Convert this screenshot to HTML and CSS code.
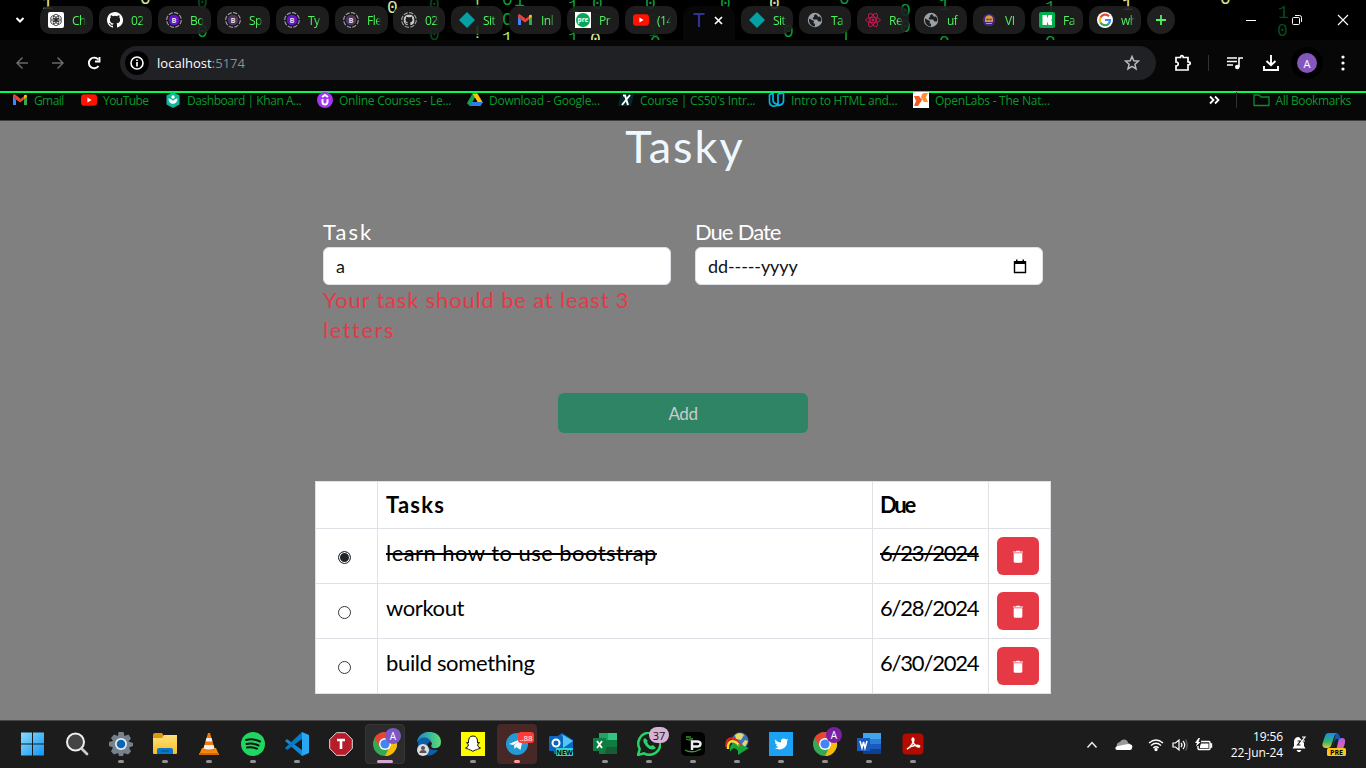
FILE: index.html
```html
<!DOCTYPE html>
<html lang="en">
<head>
<meta charset="utf-8">
<title>Tasky</title>
<link rel="stylesheet" href="styles.css">
</head>
<body>
<svg class="defs" width="0" height="0">
  <defs>
    <linearGradient id="win" x2="1" y2="1"><stop stop-color="#86dcfb"/><stop offset="1" stop-color="#1495f5"/></linearGradient>
    <linearGradient id="fold" x2="0" y2="1"><stop stop-color="#ffe07b"/><stop offset="1" stop-color="#f8bd25"/></linearGradient>
    <linearGradient id="edge" x2="1" y2="0"><stop stop-color="#1686d5"/><stop offset="1" stop-color="#5ddf70"/></linearGradient>
    <linearGradient id="cop" x2="0" y2="1"><stop stop-color="#168ce8"/><stop offset=".6" stop-color="#37b56b"/><stop offset="1" stop-color="#e9c72c"/></linearGradient>
    <linearGradient id="cop2" x2="0" y2="1"><stop stop-color="#b059e8"/><stop offset="1" stop-color="#fb7184"/></linearGradient>
    <symbol id="gmail" viewBox="0 0 16 16"><path d="M1 4v9h3V7.5z" fill="#4285f4"/><path d="M15 4v9h-3V7.5z" fill="#34a853"/><path d="M1 3.5C1 2.3 2.5 2 3.4 2.7L8 6.2V10L1 4.8z" fill="#ea4335"/><path d="M4 4.2 8 7.2l4-3V7.6l-4 3-4-3z" fill="#ea4335"/><path d="M15 4.8 12 7.2V3.3c1-.9 3-1 3 .8z" fill="#fbbc04"/></symbol>
    <symbol id="youtube" viewBox="0 0 16 16"><rect y="2.3" width="16" height="11.5" rx="3" fill="#ff1200"/><path d="m6.4 5.5 4.2 2.5-4.2 2.5z" fill="#fff"/></symbol>
    <symbol id="github" viewBox="0 0 16 16"><path fill="currentColor" d="M8 0C3.58 0 0 3.58 0 8c0 3.54 2.29 6.53 5.47 7.59.4.07.55-.17.55-.38v-1.49c-2.01.37-2.53-.49-2.69-.94-.09-.23-.48-.94-.82-1.13-.28-.15-.68-.52-.01-.53.63-.01 1.08.58 1.23.82.72 1.21 1.87.87 2.33.66.07-.52.28-.87.51-1.07-1.78-.2-3.64-.89-3.64-3.95 0-.87.31-1.59.82-2.15-.08-.2-.36-1.02.08-2.12 0 0 .67-.21 2.2.82a7.4 7.4 0 0 1 4 0c1.53-1.04 2.2-.82 2.2-.82.44 1.1.16 1.92.08 2.12.51.56.82 1.27.82 2.15 0 3.07-1.87 3.75-3.65 3.95.29.25.54.73.54 1.48v2.2c0 .21.15.46.55.38A8 8 0 0 0 8 0z"/></symbol>
    <symbol id="boot" viewBox="0 0 16 16"><circle cx="8" cy="8" r="7.3" fill="#17131c" stroke="#9b9b9f" stroke-width="1.2" stroke-dasharray="4.4 1.3"/><circle cx="8" cy="8" r="5.4" fill="currentColor"/><text x="8" y="10.8" font-size="7.5" font-weight="700" text-anchor="middle" fill="#ddd">B</text></symbol>
    <symbol id="diamond" viewBox="0 0 16 16"><path d="m8 0 8 8-8 8-8-8z" fill="#05a0a3"/></symbol>
    <symbol id="globe" viewBox="0 0 16 16"><circle cx="8" cy="8" r="7.2" fill="#9aa0a6"/><path d="M2 6.5 5 8l2 1-.5 2 1.5 1v2.5C4 14 1.5 11 2 6.5zM9 2l-2 1.5V5L5.5 6l1 1.5H10l1.5 2H14l.5-2.5L13 4.5l-2 .3z" fill="#1d1e20"/></symbol>
    <symbol id="chrome" viewBox="0 0 24 24"><circle cx="12" cy="12" r="12" fill="#34a853"/><path d="M1.6 6A12 12 0 0 1 22.4 6L12 7l-5 8z" fill="#ea4335"/><path d="M22.4 6A12 12 0 0 1 12 24l5-10-4-8z" fill="#fbbc04"/><circle cx="12" cy="12" r="6" fill="#fff"/><circle cx="12" cy="12" r="4.6" fill="#4285f4"/></symbol>
    <symbol id="trash" viewBox="0 0 14 14"><path d="M2 1.4h3L5.5.8h3l.5.6h3v1H2zM2.7 3.3h8.6v8.2c0 .7-.5 1.2-1.2 1.2H3.9c-.7 0-1.2-.5-1.2-1.2z" fill="#fff"/></symbol>
  </defs>
</svg>

<header class="browser">
  <div class="tabstrip">
    <svg class="rain" width="1366" height="40" viewBox="0 0 1366 40">
      <g fill="#d9e89a"><text x="42" y="9">1</text><text x="140" y="4">0</text><text x="387" y="13">0</text><text x="590" y="45">0</text><text x="769" y="9">0</text><text x="1122" y="10">1</text><text x="1220" y="4">0</text></g>
      <g fill="#0a9a36"><text x="197" y="37">0</text><text x="502" y="5">0</text><text x="502" y="25">C</text><text x="514" y="6">1</text><text x="568" y="12">1</text><text x="592" y="9">0</text><text x="645" y="9">0</text><text x="650" y="48">0</text><text x="720" y="9">0</text><text x="783" y="37">0</text><text x="900" y="16">0</text><text x="900" y="32">0</text><text x="939" y="10">1</text><text x="939" y="48">0</text><text x="1045" y="13">1</text><text x="1045" y="48">0</text><text x="568" y="44">1</text><text x="840" y="42">1</text><text x="839" y="4">0</text></g>
      <g fill="#9de071"><text x="502" y="44">1</text><text x="472" y="8">!</text><text x="472" y="38">!</text></g>
      <g fill="#064b1d"><text x="429" y="10">0</text><text x="429" y="26">0</text><text x="429" y="40">0</text><text x="580" y="26">1</text><text x="590" y="25">0</text><text x="648" y="26">0</text><text x="648" y="36">1</text><text x="1278" y="18">1</text><text x="1277" y="36">0</text><text x="197" y="8">0</text></g>
    </svg>
    <div class="tabsearch"><svg width="10" height="8"><path d="m1.500 2 3.500 3.500L8.500 2" stroke="#fff" stroke-width="2" fill="none"/></svg></div>
    <div class="tabs">
      <div class="tab wide"><svg width="16" height="16"><rect width="16" height="16" rx="2" fill="#fff"/><g fill="none" stroke="#222" stroke-width=".75"><ellipse cx="8" cy="5.500" rx="2.700" ry="3.300"/><ellipse cx="8" cy="5.500" rx="2.700" ry="3.300" transform="rotate(60 8 8)"/><ellipse cx="8" cy="5.500" rx="2.700" ry="3.300" transform="rotate(120 8 8)"/><ellipse cx="8" cy="5.500" rx="2.700" ry="3.300" transform="rotate(180 8 8)"/><ellipse cx="8" cy="5.500" rx="2.700" ry="3.300" transform="rotate(240 8 8)"/><ellipse cx="8" cy="5.500" rx="2.700" ry="3.300" transform="rotate(300 8 8)"/></g></svg><span>Ch</span></div>
      <div class="tab wide white"><svg width="16" height="16"><use href="#github"/></svg><span>02</span></div>
      <div class="tab wide violet"><svg width="16" height="16"><use href="#boot"/></svg><span>Bo</span></div>
      <div class="tab wide plum"><svg width="16" height="16"><use href="#boot"/></svg><span>Sp</span></div>
      <div class="tab wide violet"><svg width="16" height="16"><use href="#boot"/></svg><span>Ty</span></div>
      <div class="tab wide plum"><svg width="16" height="16"><use href="#boot"/></svg><span>Fle</span></div>
      <div class="tab grey"><svg width="16" height="16"><circle cx="8" cy="8" r="7.300" fill="none" stroke="#999" stroke-width="1.200" stroke-dasharray="4.400 1.300"/><use href="#github" x="2.500" y="2.500" width="11" height="11"/></svg><span>02</span></div>
      <div class="tab"><svg width="16" height="16"><use href="#diamond"/></svg><span>Sit</span></div>
      <div class="tab"><svg width="16" height="16"><use href="#gmail"/></svg><span>Inl</span></div>
      <div class="tab"><svg width="16" height="16"><rect width="16" height="16" fill="#fff"/><circle cx="8" cy="8" r="7" fill="#08a558"/><text x="8" y="10.300" font-size="6.500" font-weight="700" text-anchor="middle" fill="#fff">pre</text></svg><span>Pr</span></div>
      <div class="tab"><svg width="16" height="16"><use href="#youtube"/></svg><span>(14</span></div>
      <div class="tab active"><svg width="16" height="16"><path d="M2.500 2h11M8 2v13" stroke="#303394" stroke-width="2.200"/></svg><svg class="close" width="9" height="9"><path d="m1 1 7 7m0-7-7 7" stroke="#fff" stroke-width="1.700"/></svg></div>
      <div class="tab"><svg width="16" height="16"><use href="#diamond"/></svg><span>Sit</span></div>
      <div class="tab"><svg width="16" height="16"><use href="#globe"/></svg><span>Ta</span></div>
      <div class="tab"><svg width="16" height="16"><g fill="none" stroke="#c2184f"><ellipse cx="8" cy="8" rx="7.200" ry="2.800"/><ellipse cx="8" cy="8" rx="7.200" ry="2.800" transform="rotate(60 8 8)"/><ellipse cx="8" cy="8" rx="7.200" ry="2.800" transform="rotate(120 8 8)"/></g><circle cx="8" cy="8" r="1.500" fill="#c2184f"/></svg><span>Re</span></div>
      <div class="tab"><svg width="16" height="16"><use href="#globe"/></svg><span>uf</span></div>
      <div class="tab"><svg width="16" height="16"><circle cx="8" cy="8" r="6.300" fill="#432779"/><path d="M4 7c0-5 8-5 8 0v3H4zM5 11h6v1H5z" fill="#d49a43"/><path d="M5.500 7.500h2m1 0h2" stroke="#432779" stroke-width="1.500"/></svg><span>VI</span></div>
      <div class="tab"><svg width="16" height="16"><rect width="16" height="16" rx="2" fill="#00b14f"/><path d="M3.500 3H8v3.500L9.500 3H13v4l-1 1 1 1v4H9.500L8 9.500V13H3.500z" fill="#fff"/></svg><span>Fa</span></div>
      <div class="tab"><svg width="16" height="16"><circle cx="8" cy="8" r="8" fill="#fff"/><g fill="none" stroke-width="2.200"><path d="M12 4.300A5.200 5.200 0 0 0 3.400 5.600" stroke="#ea4335"/><path d="M3.400 5.600a5.200 5.200 0 0 0 0 4.800" stroke="#fbbc04"/><path d="M3.400 10.400a5.200 5.200 0 0 0 8.300 1.300" stroke="#34a853"/><path d="M11.700 11.700A5 5 0 0 0 13 8H8" stroke="#4285f4"/></g></svg><span>wh</span></div>
      <div class="newtab"><svg width="12" height="12"><path d="M6 1v10M1 6h10" stroke="#50f260" stroke-width="1.800"/></svg></div>
    </div>
    <div class="wincontrols">
      <svg width="12" height="12"><path d="M1 6.500h10" stroke="#fff"/></svg>
      <svg width="12" height="12" fill="none" stroke="#fff"><rect x="1.500" y="3.500" width="7" height="7" rx="1"/><path d="M4 1.500h4.500a2 2 0 0 1 2 2V8"/></svg>
      <svg width="12" height="12"><path d="m1 1 10 10m0-10L1 11" stroke="#fff" stroke-width="1.100"/></svg>
    </div>
  </div>

  <div class="toolbar">
    <svg width="14" height="14" fill="none" stroke="#68696b" stroke-width="1.500"><path d="M13 7H2m5.500-5.500L2 7l5.500 5.500"/></svg>
    <svg width="14" height="14" fill="none" stroke="#68696b" stroke-width="1.500"><path d="M1 7h11M6.500 1.500 12 7l-5.500 5.500"/></svg>
    <svg width="14" height="14" fill="none" stroke="#fff" stroke-width="1.900"><path d="M11.500 10A5.300 5.300 0 1 1 11.200 3.500M12.500 1v4.500H8"/></svg>
    <div class="address">
      <span class="info"><svg width="14" height="14" fill="none" stroke="#fff"><circle cx="7" cy="7" r="6" stroke-width="1.600"/><path d="M7 6v4.500M7 3.500V5" stroke-width="1.700"/></svg></span>
      <span class="url">localhost<i>:5174</i></span>
      <svg class="star" width="16" height="16"><path d="m8 1.500 1.800 4.300 4.600.4-3.500 3 1.100 4.600L8 11.300l-4 2.500 1.100-4.600-3.500-3 4.600-.4z" fill="none" stroke="#bbb" stroke-width="1.500"/></svg>
    </div>
    <div class="actions">
      <svg width="18" height="18"><path d="M2 3.500h4.500c-.2-2.500 3-2.500 2.800 0H14v4.300c3 0 3 3 0 3V16H2v-4c3 .2 3-4.200 0-4z" fill="none" stroke="#fff" stroke-width="1.700"/></svg>
      <b class="rule"></b>
      <svg class="queue" width="16" height="14"><path d="M0 2h10M0 5.500h10M0 9h6M12 11V2h4" fill="none" stroke="#fff" stroke-width="1.600"/><circle cx="10.300" cy="11" r="2.300" fill="#fff"/></svg>
      <svg class="download" width="18" height="18" fill="none" stroke="#fff" stroke-width="1.900"><path d="M9 1v10M4.500 7 9 11.300 13.500 7M2 12v4h14v-4"/></svg>
      <span class="halo"><span class="avatar">A</span></span>
      <svg width="4" height="16" fill="#fff"><circle cx="2" cy="2" r="1.600"/><circle cx="2" cy="8" r="1.600"/><circle cx="2" cy="14" r="1.600"/></svg>
    </div>
  </div>

  <nav class="bookmarks">
    <div class="marks">
      <a><svg width="16" height="16"><use href="#gmail"/></svg><span>Gmail</span></a>
      <a><svg width="16" height="16"><use href="#youtube"/></svg><span>YouTube</span></a>
      <a><svg width="16" height="16"><path d="m8 0 6.500 3.500v9L8 16l-6.500-3.500v-9z" fill="#11b69b"/><circle cx="8" cy="5" r="1.700" fill="#fff"/><path d="M3.500 6.500c2 0 3.500 1 4.500 2.500 1-1.500 2.500-2.500 4.500-2.500 0 7-9 7-9 0z" fill="#fff"/></svg><span>Dashboard | Khan A...</span></a>
      <a><svg width="16" height="16"><circle cx="8" cy="8" r="8" fill="#a435f0"/><path d="M5.500 7v3a2.500 2.500 0 0 0 5 0V7M5 5l3-2 3 2" fill="none" stroke="#fff" stroke-width="2"/></svg><span>Online Courses - Le...</span></a>
      <a><svg width="16" height="16"><path d="M5.500 1.500h5L5 11l-2.500 3L0 11z" fill="#0fa452"/><path d="M5.500 1.500h5L16 11h-5z" fill="#ffc107"/><path d="M5 10h11l-2.500 4h-11z" fill="#2b7df0"/><path d="m8 6 2.300 4H5.700z" fill="#080808"/></svg><span>Download - Google...</span></a>
      <a><svg width="16" height="16"><path d="M3 2h13l-3 12H0z" fill="#022629"/><path d="M5 3.500h2L10 13M12 3 4 13" fill="none" stroke="#fff" stroke-width="2"/></svg><span>Course | CS50's Intr...</span></a>
      <a><svg width="17" height="16" fill="none" stroke="#03b3e4" stroke-width="1.700"><path d="M5 1 1.500 3v7c0 4 5 6 8.500 2V2M5 1v7c0 5 6 4 6 4M10 2l5.500-1v8c0 4-5 5-8 4"/></svg><span>Intro to HTML and...</span></a>
      <a><svg width="16" height="16"><path d="M0 0h16v16H0z" fill="#fff"/><path d="M1 4h5l3 4-4 6H1l2-5z" fill="#f05a28"/><path d="m9 2 2-1h4l-2 4 2 5h-4L8 6z" fill="#ff9135"/></svg><span>OpenLabs - The Nat...</span></a>
    </div>
    <div class="all">
      <svg width="11" height="10"><path d="m1 1.500 3.500 3.500L1 8.500m5-7L9.500 5 6 8.500" fill="none" stroke="#fff" stroke-width="1.800"/></svg>
      <b class="rule"></b>
      <a><svg width="17" height="14"><path d="M1 2h5l2 2h8v8.500H1z" fill="none" stroke="#118a2d" stroke-width="1.300"/></svg><span>All Bookmarks</span></a>
    </div>
  </nav>
</header>

<main class="page">
  <h1>Tasky</h1>
  <form class="form">
    <label class="field"><span class="caption task">Task</span>
      <span class="control typed">a</span>
      <span class="error"><span class="e1">Your task should be at least 3</span><br><span class="e2">letters</span></span></label>
    <label class="field"><span class="caption date">Due Date</span>
      <span class="control"><span class="ph">dd-----yyyy</span><svg width="14" height="15"><path d="M1.500 3h11v10.500h-11z" fill="none" stroke="#000" stroke-width="1.400"/><path d="M1 2h12v3H1zM3 .5h1.500V3H3zM9.500.5H11V3H9.500z"/></svg></span></label>
  </form>
  <button class="add"><span>Add</span></button>
  <table class="tasks">
    <colgroup><col class="c1"><col class="c2"><col class="c3"><col class="c4"></colgroup>
    <tr><th></th><th class="h-task">Tasks</th><th class="h-due">Due</th><th></th></tr>
    <tr><td class="pick"><input type="radio" name="a" checked></td><td><span class="t1 done">learn how to use bootstrap</span></td><td><span class="day done">6/23/2024</span></td><td class="act"><button class="del"><svg width="14" height="14"><use href="#trash"/></svg></button></td></tr>
    <tr><td class="pick"><input type="radio" name="b"></td><td><span class="t2">workout</span></td><td><span class="day">6/28/2024</span></td><td class="act"><button class="del"><svg width="14" height="14"><use href="#trash"/></svg></button></td></tr>
    <tr><td class="pick"><input type="radio" name="c"></td><td><span class="t3">build something</span></td><td><span class="day">6/30/2024</span></td><td class="act"><button class="del"><svg width="14" height="14"><use href="#trash"/></svg></button></td></tr>
  </table>
</main>

<footer class="taskbar">
  <div class="apps">
    <div class="app idle"><svg width="24" height="24" fill="url(#win)"><path d="M0 .500h11v11H0zM12 .500h11v11H12zM0 12.500h11v11H0zM12 12.500h11v11H12z"/></svg></div>
    <div class="app idle"><svg width="24" height="24"><circle cx="10.500" cy="10" r="8.500" fill="#444" stroke="#eee" stroke-width="2"/><path d="m17 17 5 5" stroke="#ccc" stroke-width="2.800" stroke-linecap="round"/></svg></div>
    <div class="app"><svg width="24" height="24"><path d="M9.500 0h5l1 4 4-1.500L22 6.500 19.500 9.500 24 11v3l-4 1.500 2 4-3 3-4-1.500-1 3h-4L9 21l-4 1.500-3-3 2-4L0 14v-4l4-1-2-3L5 2.500 9 4z" fill="#77818b"/><circle cx="12" cy="12" r="6" fill="#e8eef2"/><circle cx="12" cy="12" r="4.300" fill="#0966b7"/></svg></div>
    <div class="app"><svg width="24" height="24"><path d="M0 3q0-2 2-2h7l2 3h11v5H0z" fill="#d99a0d"/><path d="M0 6h9l2-3h13v18q0 1-1 1H1q-1 0-1-1z" fill="url(#fold)"/><path d="M4 22v-4q0-2 2-2h12q2 0 2 2v4z" fill="#0876c9"/><path d="M8 19h8" stroke="#064d8c"/></svg></div>
    <div class="app"><svg width="24" height="24"><path d="M5 16h14l3 7H2z" fill="#f58b0b"/><path d="M11 1h2l5 17c-3 2-9 2-12 0z" fill="#f27b0b"/><path d="M9.500 6h5l1 3.500h-7zM7.500 13h9l1 3.500q-5.500 2-11 0z" fill="#f2f2f2"/><path d="M2 21h20v2H2z" fill="#d66202"/></svg></div>
    <div class="app"><svg width="24" height="24"><circle cx="12" cy="12" r="12" fill="#1ed760"/><path d="M5 8q7-2 14 1.500M5.500 12q6-1.500 12 1.500M6 15.500q5-1 10 1.200" fill="none" stroke="#111" stroke-width="2" stroke-linecap="round"/></svg></div>
    <div class="app"><svg width="24" height="24"><path d="M17 0v24L0 9l2-2 15 11z" fill="#1485d4"/><path d="M17 0v7L2 18l-2-2z" fill="#0879c9"/><path d="m17 0 7 3v18l-7 3z" fill="#27a7f2"/></svg></div>
    <div class="app idle"><svg width="24" height="24"><path d="M7.500.700h9l6.800 6.800v9l-6.800 6.800h-9L.7 16.500v-9z" fill="#b71c2b" stroke="#ddd"/><path d="M8 8h8M12 8v9" stroke="#fff" stroke-width="2.600"/></svg></div>
    <div class="app current"><svg width="24" height="24"><use href="#chrome"/></svg><em class="badge">A</em></div>
    <div class="app idle"><svg width="24" height="24"><path d="M0 10C2-4 24-3 24 10q0 7-8 6-3-1-1-4-1-5-7-5-5 0-8 3z" fill="url(#edge)"/><path d="M1 9C5 3 13 6 14 10 8 10 9 19 21 18 14 28 0 24 1 9z" fill="#0d5da7"/><circle cx="6" cy="18" r="6" fill="#ddd"/><circle cx="6" cy="16" r="2" fill="#555"/><path d="M2.500 21q0-3 3.500-3t3.500 3z" fill="#555"/></svg></div>
    <div class="app"><svg width="24" height="24"><path d="M0 0h24v24H0z" fill="#fffc00"/><path d="M12 4q5 0 4.500 7l2-.5-2 2.500q1 3 3 3-1 1-3 1-.5 1-2 1-3 2.500-5 0-1.500 0-2-1-2 0-3-1 2 0 3-3L5.500 10.500l2 .5Q7 4 12 4z" fill="#fff" stroke="#111"/></svg></div>
    <div class="app alert"><svg width="24" height="24"><circle cx="12" cy="12" r="11" fill="#229bd5"/><path d="m4 12 14-6-2.500 12-4-3-2 2-.5-4 6-4-7 4z" fill="#fff"/></svg><em class="badge count">..88</em></div>
    <div class="app idle"><svg width="24" height="24"><path d="m3 8 10-7 11 7v14H5z" fill="#1268c1"/><path d="m6 8 8-5 10 6-10 7z" fill="#55c7f5"/><rect y="4" width="14" height="15" rx="1" fill="#0968bd"/><circle cx="7" cy="11" r="3.500" fill="none" stroke="#fff" stroke-width="2"/><rect x="7" y="16" width="17" height="8" rx="1" fill="#28d8dc"/><text x="15.500" y="22.600" text-anchor="middle" font-size="7" font-weight="700">NEW</text></svg></div>
    <div class="app"><svg width="24" height="24"><path d="M6 1h18v21H6z" fill="#21a366"/><path d="M6 8h9v14H6z" fill="#107c41"/><path d="M15 8h9v7h-9z" fill="#107c41"/><path d="M15 1h9v7h-9z" fill="#33c481"/><path d="M12 15h12v7H12z" fill="#185c37"/><rect y="6" width="13" height="13" fill="#107c41"/><path d="m4 9 5 7m0-7-5 7" stroke="#fff" stroke-width="1.800"/></svg></div>
    <div class="app"><svg width="24" height="24" fill="none"><path d="m1 23 1.700-6A11 11 0 1 1 7 21.300z" stroke="#25d366" stroke-width="2.500"/><path d="M8 6q-4 2 1 8t10 2l-3-3-2 1q-3-1-4-4l1-1z" fill="#25d366"/></svg><em class="badge pink">37</em></div>
    <div class="app"><svg width="24" height="24"><rect width="24" height="24" rx="5" fill="#000"/><path d="M11 18V9.500h5q3.500 0 3.500 2.500T16 14.500h-5" fill="none" stroke="#eee" stroke-width="2.400"/><path d="M4 18q7 4 16-1M5 7l3 1m1-4v5m-4-4h3m2 2h2" fill="none" stroke="#3a9b31" stroke-width="1.300"/></svg></div>
    <div class="app"><svg width="24" height="24"><circle cx="15" cy="9" r="8.500" fill="#3f74b8"/><path d="M10 3q5-4 9 0l-3 5-5-1zM20 8l3 1-3 6-3-3z" fill="#dfda6f"/><path d="M1.500 15C0 3 11 4 16 14" fill="none" stroke="#d42921" stroke-width="2.200"/><path d="M3 17C2 6 11 8 15 15" fill="none" stroke="#ffdc27" stroke-width="2.500"/><path d="M5 20C4 10 10 10 14 15l-1-3 11 4-11 7v-4q-4-6-8 1z" fill="#15a638"/></svg></div>
    <div class="app"><svg width="24" height="24"><path d="M0 0h24v24H0z" fill="#1da1f2"/><path d="M6 7.500q2.500 3 6 3c-1-4 3-5 5-3l2-.6-1 2C19 15 12 20 6 16q2 0 3.500-1-2-.3-2.700-2h1.500q-2.300-1-2.300-3l1.200.300Q5 9 6 7.500z" fill="#fff"/></svg></div>
    <div class="app"><svg width="24" height="24"><use href="#chrome"/></svg><em class="badge purple">A</em></div>
    <div class="app"><svg width="24" height="24"><path d="M6 1h18v6H6z" fill="#41a5ee"/><path d="M6 7h18v5H6z" fill="#2b7cd3"/><path d="M6 12h18v5H6z" fill="#185abd"/><path d="M6 17h18v5H6z" fill="#103f91"/><rect y="6" width="13" height="13" fill="#185abd"/><path d="m3 9 2 7 1.500-6L8 16l2-7" fill="none" stroke="#fff" stroke-width="1.500"/></svg></div>
    <div class="app"><svg width="24" height="24"><rect x="1.500" y="1.500" width="21" height="21" rx="4" fill="#b30b00"/><path d="M6 17c3-1 9-9 6-11-3 1 2 9 6 9 3-2-6-3-12 2z" fill="none" stroke="#fff" stroke-width="1.500"/></svg></div>
  </div>
  <div class="tray">
    <svg class="chev" width="12" height="12"><path d="m1.500 8.500 4.500-5 4.500 5" fill="none" stroke="#eee" stroke-width="1.500"/></svg>
    <svg class="cloud" width="18" height="12"><path d="M2 8c-1-3 1-5 3-5 2-4 8-3 8 1 2 0 3 2 2 4z" fill="#999"/><path d="M3 11c-4 0-3-4 0-4l10-2c4 0 5 2 4 4 0 2-2 2-3 2z" fill="#fff"/></svg>
    <svg class="wifi" width="16" height="14" fill="none" stroke="#fff" stroke-width="1.300"><path d="M1 5q7-6 14 0M3 7.500q5-4.500 10 0M5.300 10Q8 7.500 10.700 10"/><circle cx="8" cy="11.500" r="1" fill="#fff"/></svg>
    <svg class="sound" width="16" height="14" fill="none" stroke="#fff" stroke-width="1.200"><path d="M1 5h2.500L7 2v10L3.500 9H1zM9 5q2 2 0 4M11 3q3.500 4 0 8"/><path d="M13.500 1.500q3.500 5.500 0 11" stroke="#666"/></svg>
    <svg class="battery" width="18" height="14"><path d="M6 3.500h8q1 0 1 1v6q0 1-1 1H4q-1 0-1-1V8M15.500 6h1v3h-1" fill="none" stroke="#fff" stroke-width="1.400"/><path d="M6 5.500h7.500v4.500H5V8zM3.500 0 0 5h2L1 8.500 5.500 4h-2L5 0z" fill="#fff"/></svg>
    <div class="clock"><span>19:56</span><span>22-Jun-24</span></div>
    <svg class="bell" width="16" height="17"><path d="M7 1q-5 0-5 5v4L.5 12.500h13L12 10V7M4.500 14h5l-1.500 2H6z" fill="#fff"/><path d="M5.500 5h3l-3 4h3" fill="none" stroke="#1c1c1c" stroke-width="1.200"/><path d="M10 1h3l-3 4h3" fill="none" stroke="#fff" stroke-width="1.200"/></svg>
    <svg class="copilot" width="25" height="25"><path d="M17 6h3q4 0 3 5l-3 9q-1 3-3 3h-7q3 0 4-4z" fill="url(#cop2)"/><path d="M14 1q3 0 4 4l1 2h-4q-2 0-3 4l-2 6z" fill="#1755a7"/><path d="M6 1h9q-2 1-3 4L9 14q-1 2-3 2H3q-4-1-2-6l2-6q1-3 3-3z" fill="url(#cop)"/><rect x="5" y="16" width="19" height="8" rx="1.500" fill="#ffc414"/><text x="14.500" y="22.600" font-size="7" font-weight="700" text-anchor="middle">PRE</text></svg>
  </div>
</footer>
</body>
</html>
```
FILE: styles.css
```css
* { box-sizing: border-box; }
body { margin: 0; width: 1366px; height: 768px; overflow: hidden; display: flex; flex-direction: column; background: gray; font-family: "Open Sans", "Noto Sans", sans-serif; }
svg { display: block; flex: none; }
.defs { position: absolute; }
i, em { font-style: normal; }

.browser { height: 121px; background: #070707; border-bottom: 1px solid #3e3e40; }
.tabstrip { position: relative; display: flex; height: 40px; background: #000; overflow: hidden; }
.rain { position: absolute; inset: 0; font: 18px "Liberation Mono", monospace; }
.tabsearch { position: relative; width: 40px; padding: 16px 0 0 15px; }
.tabs { position: relative; display: flex; gap: 6px; padding-top: 6px; }
.tab { display: flex; align-items: center; width: 52px; height: 28px; padding-left: 8px; gap: 8px; border-radius: 10px; background: rgba(32, 32, 33, .9); color: #50f260; font-size: 12px; overflow: hidden; }
.tab.wide { width: 53px; }
.tab span { width: 14px; overflow: hidden; white-space: nowrap; letter-spacing: -.5px; -webkit-mask-image: linear-gradient(90deg, #000 65%, transparent); }
.tab.active { height: 34px; padding: 0 0 6px 8px; gap: 7px; background: #070707; border-radius: 10px 10px 0 0; }
.tab.white svg { color: #fff; }
.tab.violet svg { color: #6a11cb; }
.tab.plum svg { color: #4d3761; }
.tab.grey { margin-left: -1px; }
.tab.grey svg { color: #c9c9c9; }
.newtab { display: grid; place-items: center; width: 28px; height: 28px; border-radius: 50%; background: #202021; }
.wincontrols { position: relative; display: flex; gap: 34px; margin-left: auto; padding: 14px 17px 0 0; }

.toolbar { display: flex; align-items: center; height: 46px; padding: 0 19px 0 15px; }
.toolbar > svg { margin-right: 22px; }
.toolbar > svg:nth-child(3) { margin-right: 19px; }
.address { display: flex; align-items: center; width: 1036px; height: 34px; padding: 0 16px 0 5px; border-radius: 17px; background: #202124; }
.info { display: grid; place-items: center; width: 24px; height: 24px; border-radius: 50%; background: #000; }
.url { margin-left: 8px; color: #fff; font-size: 13px; letter-spacing: .03px; }
.url i { color: #8b8d91; }
.star { margin-left: auto; }
.actions { display: flex; align-items: center; padding-left: 18px; }
.rule { width: 1px; height: 16px; background: #303134; }
.actions .rule { margin: 0 18px 0 16px; }
.queue { margin-right: 19px; }
.download { margin-right: 11px; }
.halo { display: grid; place-items: center; width: 32px; height: 32px; margin-right: 18px; border-radius: 50%; background: #000; }
.avatar { display: grid; place-items: center; width: 20px; height: 20px; border-radius: 50%; background: #8557bd; color: #fff; font-size: 11px; }

.bookmarks { display: flex; justify-content: space-between; height: 33px; margin-top: 5px; padding: 0 15px 0 12px; border-top: 2px solid #00ff4c; color: #069a2b; font-size: 12px; }
.bookmarks a { display: flex; align-items: center; height: 16px; gap: 6px; white-space: nowrap; letter-spacing: -.25px; }
.marks a:nth-child(1) { letter-spacing: -.6px; }
.marks a:nth-child(2) { letter-spacing: -.55px; }
.marks a:nth-child(3) { letter-spacing: -.45px; }
.marks a:first-child span { padding-left: 0; }
.marks { display: grid; grid-template-columns: 69px 84px 152px 150px 151px 150px 145px 150px; height: 16px; margin-top: -1px; }
.all { display: flex; align-items: center; gap: 16px; height: 16px; margin-top: -1px; }
.all a { letter-spacing: -.35px; }

.page { display: flex; flex-direction: column; align-items: center; height: 599px; font-family: Lato, sans-serif; font-size: 22px; color: #000; background: gray; }
.page span { white-space: nowrap; }
h1 { margin: 0; padding-left: 4px; height: 94px; color: #f0f8ff; font-size: 45px; line-height: 51px; font-weight: 400; letter-spacing: 2px; }
.form { display: flex; gap: 24px; width: 720px; height: 178px; }
.field { display: flex; flex-direction: column; width: 348px; color: #fff; }
.caption { height: 32px; line-height: 33px; }
.task { letter-spacing: 2px; }
.date { letter-spacing: -1.05px; word-spacing: 1px; }
.control { display: flex; align-items: center; justify-content: space-between; height: 38px; padding: 0 15px 0 12px; border: 1px solid #dee2e6; border-radius: 6px; background: #fff; color: #111; font-size: 18px; }
.ph { letter-spacing: -.1px; }
.error { color: #e63946; line-height: 30px; }
.e1 { letter-spacing: .83px; }
.e2 { letter-spacing: 1.5px; }
.add { width: 250px; height: 40px; padding: 0; border: 0; border-radius: 6px; background: #2e8464; color: #ccc; font: 17px Lato, sans-serif; letter-spacing: -.4px; }
.tasks { width: 736px; margin-top: 48px; border-collapse: collapse; table-layout: fixed; background: #fff; }
.c1 { width: 62px; } .c2 { width: 495px; } .c3 { width: 116px; } .c4 { width: 62px; }
.tasks th, .tasks td { height: 55px; padding: 0 8px; border: 1px solid #dee2e6; text-align: left; vertical-align: top; line-height: 47px; }
.tasks th { height: 47px; line-height: 46px; }
.h-task { letter-spacing: 1.2px; }
.tasks .h-due { letter-spacing: -2.3px; padding-left: 7px; }
.t1 { letter-spacing: .45px; }
.t2 { letter-spacing: -.4px; }
.t3 { letter-spacing: -.35px; }
.day { letter-spacing: -1.2px; margin-left: -1px; }
.done { text-decoration: line-through 2px; }
.tasks .pick, .tasks .act { vertical-align: middle; line-height: 0; }
.pick input { appearance: none; width: 13px; height: 13px; margin: 2px 0 0 14px; border: 1px solid #34383b; border-radius: 50%; background: #fff; }
.pick input:checked { background: #212529; box-shadow: inset 0 0 0 1px #fff; }
.del { display: grid; place-items: center; width: 42px; height: 38px; padding: 2px 0 0; border: 0; border-radius: 6px; background: #e63946; }

.taskbar { display: flex; justify-content: space-between; height: 48px; background: #1c1c1c; border-top: 1px solid #474747; }
.apps { display: flex; gap: 4px; padding: 3px 0 0 13px; }
.app { position: relative; display: grid; justify-items: center; align-content: start; width: 40px; height: 40px; padding-top: 8px; border-radius: 4px; }
.app::after { content: ""; position: absolute; bottom: 1px; left: 17px; width: 6px; height: 3px; border-radius: 2px; background: #929292; }
.app.idle::after { display: none; }
.current { background: #2c2c2c; border: 1px solid #363636; padding-top: 7px; }
.current::after { left: 11px; bottom: 0; width: 16px; background: #d5a8d0; }
.alert { background: #482827; }
.alert::after { background: #ff999e; }
.badge { position: absolute; top: 3px; right: 3px; display: grid; place-items: center; width: 16px; height: 16px; border-radius: 8px; background: #7e57c2; color: #fff; font-size: 10px; }
.count { top: 8px; right: 3px; width: 16px; height: 11px; border-radius: 3px; background: #ff3b36; font-size: 8px; letter-spacing: -.2px; }
.pink { top: 3px; right: 0; width: 20px; background: #d8b1d3; color: #111; font-size: 11px; }
.purple { background: #7b1fa2; }
.tray { display: flex; align-items: center; padding-right: 19px; color: #fff; }
.chev { margin-right: 17px; } .cloud { margin-right: 15px; } .wifi { margin-right: 8px; } .sound { margin-right: 7px; }
.battery { margin-right: 15px; }
.clock { display: flex; flex-direction: column; align-items: flex-end; width: 55px; font-size: 12px; line-height: 16px; letter-spacing: -.1px; white-space: nowrap; }
.bell { margin: 0 14px 0 9px; }
```
